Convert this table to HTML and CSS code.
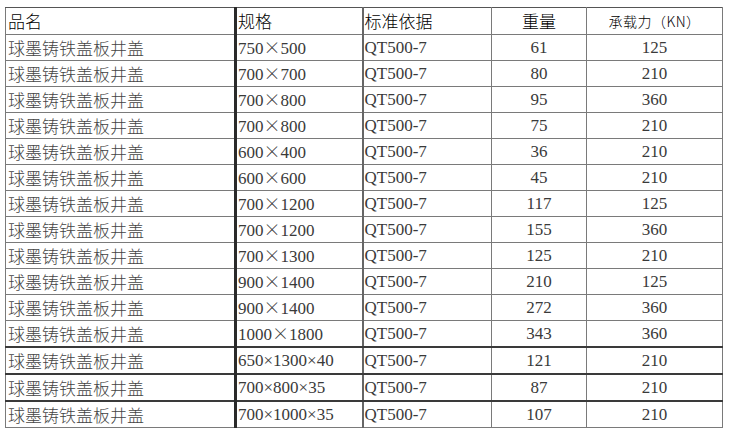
FILE: index.html
```html
<!DOCTYPE html>
<html lang="zh">
<head>
<meta charset="utf-8">
<link rel="stylesheet" href="styles.css">
</head>
<body>
<table class="spec">
  <colgroup>
    <col class="c1"><col class="c2"><col class="c3"><col class="c4"><col class="c5">
  </colgroup>
  <thead>
    <tr class="head">
      <th class="name">品名</th>
      <th class="size">规格</th>
      <th class="std">标准依据</th>
      <th class="num">重量</th>
      <th class="num small">承载力（KN）</th>
    </tr>
  </thead>
  <tbody>
    <tr><td class="name">球墨铸铁盖板井盖</td><td class="size">750<span class="x">×</span>500</td><td class="std">QT500-7</td><td class="num">61</td><td class="num">125</td></tr>
    <tr><td class="name">球墨铸铁盖板井盖</td><td class="size">700<span class="x">×</span>700</td><td class="std">QT500-7</td><td class="num">80</td><td class="num">210</td></tr>
    <tr><td class="name">球墨铸铁盖板井盖</td><td class="size">700<span class="x">×</span>800</td><td class="std">QT500-7</td><td class="num">95</td><td class="num">360</td></tr>
    <tr><td class="name">球墨铸铁盖板井盖</td><td class="size">700<span class="x">×</span>800</td><td class="std">QT500-7</td><td class="num">75</td><td class="num">210</td></tr>
    <tr><td class="name">球墨铸铁盖板井盖</td><td class="size">600<span class="x">×</span>400</td><td class="std">QT500-7</td><td class="num">36</td><td class="num">210</td></tr>
    <tr><td class="name">球墨铸铁盖板井盖</td><td class="size">600<span class="x">×</span>600</td><td class="std">QT500-7</td><td class="num">45</td><td class="num">210</td></tr>
    <tr><td class="name">球墨铸铁盖板井盖</td><td class="size">700<span class="x">×</span>1200</td><td class="std">QT500-7</td><td class="num">117</td><td class="num">125</td></tr>
    <tr><td class="name">球墨铸铁盖板井盖</td><td class="size">700<span class="x">×</span>1200</td><td class="std">QT500-7</td><td class="num">155</td><td class="num">360</td></tr>
    <tr><td class="name">球墨铸铁盖板井盖</td><td class="size">700<span class="x">×</span>1300</td><td class="std">QT500-7</td><td class="num">125</td><td class="num">210</td></tr>
    <tr><td class="name">球墨铸铁盖板井盖</td><td class="size">900<span class="x">×</span>1400</td><td class="std">QT500-7</td><td class="num">210</td><td class="num">125</td></tr>
    <tr><td class="name">球墨铸铁盖板井盖</td><td class="size">900<span class="x">×</span>1400</td><td class="std">QT500-7</td><td class="num">272</td><td class="num">360</td></tr>
    <tr class="dark"><td class="name">球墨铸铁盖板井盖</td><td class="size">1000<span class="x">×</span>1800</td><td class="std">QT500-7</td><td class="num">343</td><td class="num">360</td></tr>
    <tr class="dark"><td class="name">球墨铸铁盖板井盖</td><td class="size">650×1300×40</td><td class="std">QT500-7</td><td class="num">121</td><td class="num">210</td></tr>
    <tr class="dark"><td class="name">球墨铸铁盖板井盖</td><td class="size">700×800×35</td><td class="std">QT500-7</td><td class="num">87</td><td class="num">210</td></tr>
    <tr><td class="name">球墨铸铁盖板井盖</td><td class="size">700×1000×35</td><td class="std">QT500-7</td><td class="num">107</td><td class="num">210</td></tr>
  </tbody>
</table>
</body>
</html>
```

FILE: styles.css
```css
html, body {
  margin: 0;
  padding: 0;
  background: #ffffff;
}

body {
  padding: 7px 0 0 5px;
  font-family: "Liberation Serif", "Noto Sans CJK SC", serif;
  color: #3a3a3a;
}

.spec {
  border-collapse: collapse;
  table-layout: fixed;
  width: 717px;
  border: 1px solid #6f6f6f;
}

.c1 { width: 230px; }
.c2 { width: 127px; }
.c3 { width: 129px; }
.c4 { width: 95px; }
.c5 { width: 136px; }

.spec th,
.spec td {
  border: 1px solid #7a7a7a;
  padding: 0;
  height: 25px;
  font-size: 17px;
  font-weight: normal;
  line-height: 20px;
  white-space: nowrap;
  overflow: hidden;
}

.spec .head th {
  height: 26px;
  color: #000000;
  border-top-color: #555555;
}

.spec .name {
  text-align: left;
  padding-left: 2px;
  font-family: "Noto Sans CJK SC", sans-serif;
  font-weight: 300;
  color: #444444;
}

.spec .head .name,
.spec .head .size,
.spec .head .std {
  font-family: "Noto Sans CJK SC", sans-serif;
  font-weight: 300;
  color: #000000;
}

.spec .size {
  text-align: left;
  padding-left: 1px;
  border-left: 3px solid #2a2a2a;
}

.spec .std {
  text-align: left;
  padding-left: 1px;
  border-left: 2px solid #666666;
}

.spec .num {
  text-align: center;
}

.spec .head .num {
  font-family: "Noto Sans CJK SC", sans-serif;
  font-weight: 300;
  color: #000000;
  border-left-color: #222222;
}

.spec .head .small {
  font-size: 14px;
  letter-spacing: 0.5px;
}

.x {
  display: inline-block;
  width: 17px;
  text-align: center;
  font-family: "Noto Sans CJK SC", sans-serif;
  font-weight: 300;
}

.spec tr.dark td {
  border-bottom: 2px solid #3a3a3a;
}
```
